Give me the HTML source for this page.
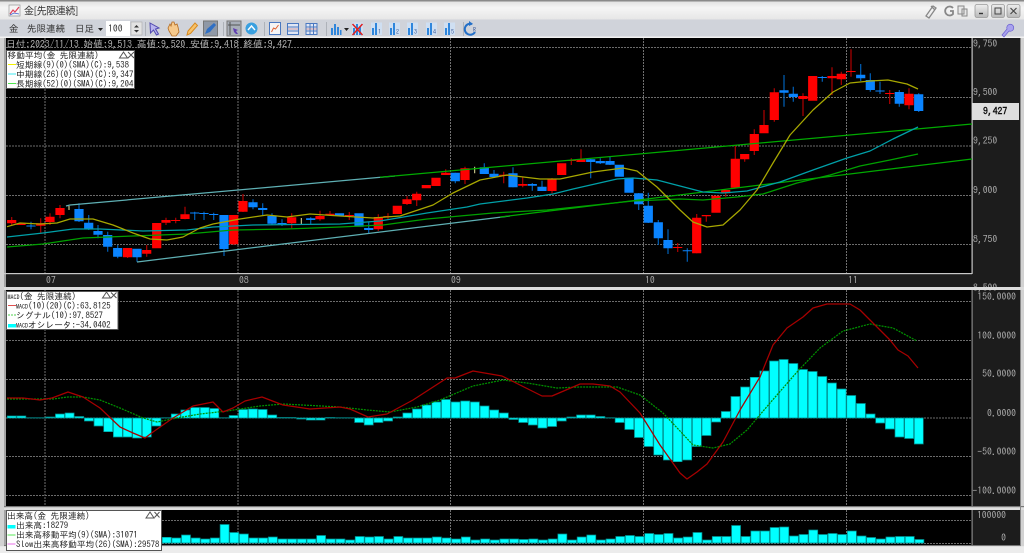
<!DOCTYPE html>
<html lang="ja"><head><meta charset="utf-8"><title>金[先限連続]</title>
<style>
html,body{margin:0;padding:0;width:1024px;height:553px;overflow:hidden;background:#d4d4d4}
svg{display:block;filter:blur(.35px)}
text{font-family:"IPAGothic","Noto Sans CJK JP",monospace;font-size:9.7px}
.a{fill:#aaa}.k{fill:#222}.k text{font-size:8.7px}
.g{stroke:#6c6c6c;stroke-width:1;stroke-dasharray:2 1;fill:none}
.v{stroke:#707070;stroke-width:1;stroke-dasharray:2 1;fill:none}
.l{fill:none;stroke-linejoin:round;stroke-width:1.25}
.h{fill:#0ff;stroke:#008a8a;stroke-width:.7}
</style></head><body>
<svg width="1024" height="553" viewBox="0 0 1024 553" xmlns="http://www.w3.org/2000/svg">
<defs><linearGradient id="tb" x1="0" y1="0" x2="0" y2="1"><stop offset="0" stop-color="#e2e2e2"/><stop offset=".35" stop-color="#f5f5f5"/><stop offset="1" stop-color="#e6e6e6"/></linearGradient>
<linearGradient id="btn" x1="0" y1="0" x2="0" y2="1"><stop offset="0" stop-color="#eee"/><stop offset="1" stop-color="#b8b8b8"/></linearGradient></defs>
<rect width="1024" height="553" fill="#d2d2d2"/>
<rect width="1024" height="1.5" fill="#8a8a8a"/>
<rect y="1.5" width="1024" height="18" fill="url(#tb)"/>
<rect y="19.5" width="1024" height="17.5" fill="#d0d3da"/>
<rect y="36.5" width="1024" height="1.5" fill="#f2f2f2"/>
<!-- title -->
<path d="M9 5h11v11H9z" fill="#f4f4f4" stroke="#999" stroke-width=".7"/><path d="M10 14l3-4 2 2 4-5" fill="none" stroke="#e0405a" stroke-width="1.2"/><path d="M10 15l4-2 5 1" fill="none" stroke="#4060d0" stroke-width=".8"/>
<text x="24" y="14.500" style="font-family:'Noto Sans CJK JP',sans-serif;font-size:10px;letter-spacing:-.4px" fill="#333">金[先限連続]</text>
<path d="M926 16l7-10 3 2-7 10zM931 6l4 4" fill="none" stroke="#888" stroke-width="1.3"/>
<path d="M953 8a4.500 4.500 0 1 0 0 6v-3h-3" fill="none" stroke="#888" stroke-width="1.8"/>
<path d="M958 6h6v8h-6zM962 9h5v7h-5z" fill="#e8e8e8" stroke="#888"/>
<g stroke="#999" stroke-width=".8"><rect x="975" y="4.500" width="13" height="13" rx="2" fill="url(#btn)"/><rect x="991.500" y="4.500" width="13" height="13" rx="2" fill="url(#btn)"/><rect x="1007" y="4.500" width="13" height="13" rx="2" fill="url(#btn)"/></g>
<path d="M979 13.500h4" stroke="#333" stroke-width="1.400"/><rect x="995" y="8" width="6" height="6" fill="none" stroke="#444"/><path d="M1010.500 8l6 6m0-6l-6 6" stroke="#444" stroke-width="1.100"/>
<!-- toolbar -->
<g fill="#333" style="font-size:9.500px"><text x="9" y="32" style="font-size:9.500px">金</text><text x="27" y="32" style="font-size:9.500px">先限連続</text><text x="75" y="32" style="font-size:9.500px">日足</text></g>
<path d="M98 28h5l-2.500 3z" fill="#222"/>
<rect x="106" y="21" width="24" height="15" fill="#fff"/><text x="108" y="32" fill="#333">100</text>
<rect x="131" y="22" width="11" height="13" fill="#e3e3e3" stroke="#aaa" stroke-width=".6"/><path d="M134 27.500l2.500-2.500 2.500 2.500zM134 30l2.500 2.500 2.500-2.500z" fill="#333"/>
<path d="M145.500 22v14" stroke="#aeb2b9"/>
<path d="M150 23l9 5-3.500 1 3 5-2 1-3-5-3 3z" fill="#b9b5ee" stroke="#5048b0"/>
<path d="M168 28l2-4 1 2 1-4 2 0 1 3 2-1 1 3 1 5-3 4h-4l-3-5z" fill="#f6c98c" stroke="#b26a20" stroke-width=".8"/>
<path d="M187 35l1-4 7-8 2.500 2.500-7 8z" fill="#f7c26a" stroke="#d88a20"/>
<rect x="203.500" y="21" width="14" height="15" fill="#8f98a6" stroke="#777"/><path d="M205 34l2-5 7-6 2 2-6 7z" fill="#2f6fc4"/>
<path d="M223.500 22v14" stroke="#aeb2b9"/>
<rect x="227" y="21" width="14" height="15" fill="#a8aeb8" stroke="#777"/><path d="M230 22v13M228 25h12" stroke="#555"/><path d="M233 28l5 2-2 1 2 3-2 0-2-2z" fill="#6040b0"/>
<circle cx="251.500" cy="28.500" r="6" fill="#3aa0e0"/><path d="M248 30l3.500-4 3.500 4" fill="none" stroke="#fff" stroke-width="1.400"/>
<path d="M264.500 22v14" stroke="#aeb2b9"/>
<rect x="269.500" y="22.500" width="11" height="12" fill="#f4f4f4" stroke="#4a78c0"/><path d="M271.500 32l2-4 2 1 3-4" fill="none" stroke="#e06030"/>
<path d="M287.500 23.500h11v11h-11zM287.500 27h11M287.500 31h11" fill="#dfe6f4" stroke="#4a78c0"/><path d="M288 29h10" stroke="#c07070" stroke-width=".6"/>
<path d="M306 23.500h11v11h-11zM306 27h11M306 31h11M310 23.500v11M313.500 23.500v11" fill="#dfe6f4" stroke="#4a78c0"/><path d="M306 29h11" stroke="#c07070" stroke-width=".6"/>
<path d="M326.500 22v14" stroke="#aeb2b9"/>
<g fill="#cfdff2"><rect x="352" y="22.500" width="11" height="12.500"/><rect x="371" y="22.500" width="11" height="12.500"/><rect x="389" y="22.500" width="11" height="12.500"/><rect x="407" y="22.500" width="11" height="12.500"/><rect x="426" y="22.500" width="11" height="12.500"/><rect x="444" y="22.500" width="11" height="12.500"/></g>
<g fill="#2f86dc"><path d="M331 28h2v7h-2zM334 24h2v11h-2zM337 27h2v8h-2zM340 30h1.500v5H340z"/></g>
<path d="M344 28h5l-2.500 3z" fill="#222"/>
<g fill="#2f86dc"><path d="M353 28h2v7h-2zM356 24h2v11h-2zM359 27h2v8h-2z"/><path d="M372 28h2v7h-2zM375 23h2v12h-2z"/><path d="M390 28h2v7h-2zM393 23h2v12h-2z"/><path d="M408 28h2v7h-2zM411 23h2v12h-2z"/><path d="M427 28h2v7h-2zM430 23h2v12h-2z"/><path d="M445 28h2v7h-2zM448 23h2v12h-2z"/></g>
<g fill="#3a5a9a" style="font-size:6px"><text x="378" y="34" style="font-size:6px">1</text><text x="396" y="34" style="font-size:6px">2</text><text x="414" y="34" style="font-size:6px">3</text><text x="433" y="34" style="font-size:6px">4</text><text x="451" y="34" style="font-size:6px">5</text></g>
<path d="M352.500 24l10 11m0-11l-10 11" stroke="#e02020" stroke-width="1.500"/>
<path d="M463.500 22v14" stroke="#aeb2b9"/>
<path d="M472 24a5.500 5.500 0 1 0 3 8" fill="none" stroke="#2470c8" stroke-width="2"/><path d="M469 21l4 3-4 2z" fill="#2470c8"/><text x="473" y="32" fill="#3a5a9a" style="font-size:6px">R</text>
<path d="M1002 35l5-6a3.500 3.500 0 1 1 2 2l-5 6z" fill="#a9a2ee" stroke="#6a60d0" stroke-width=".7"/>
<!-- panels -->
<rect x="4.500" y="38" width="1" height="508" fill="#777"/>
<rect x="6" y="38" width="966" height="235" fill="#000"/>
<rect x="6" y="274" width="966" height="13" fill="#1c1c1c"/>
<rect x="4" y="273" width="969" height="1.200" fill="#c8c8c8"/>
<rect x="972" y="38" width="48" height="249" fill="#1c1c1c"/>
<rect x="971.500" y="38" width="1.200" height="236" fill="#c8c8c8"/>
<rect x="6" y="290" width="966" height="216" fill="#000"/>
<rect x="972" y="290" width="48" height="216" fill="#1c1c1c"/>
<rect x="971.500" y="290" width="1.200" height="216" fill="#888"/>
<rect x="4" y="506" width="1020" height="1.300" fill="#777"/>
<rect x="4" y="507.300" width="1020" height="2.700" fill="#dedede"/>
<rect x="6" y="510" width="966" height="35" fill="#000"/>
<rect x="972" y="510" width="48" height="35" fill="#1c1c1c"/>
<rect x="971.500" y="510" width="1.200" height="36" fill="#888"/>
<rect x="4" y="545" width="1017" height="1.200" fill="#777"/>
<rect y="546.200" width="1024" height="7" fill="#ececec"/>
<rect x="1020" y="38" width="1" height="508" fill="#888"/>
<!-- grids -->
<path class="g" d="M6 47.500H972M6 97.500H972M6 146H972M6 195.500H972M6 244.500H972"/>
<path class="v" d="M45 38V273M238 38V273M450.500 38V273M643.500 38V273M846.500 38V273"/>
<path class="g" d="M6 301.500H972M6 340.500H972M6 379.500H972M6 418H972M6 456.500H972M6 495.500H972"/>
<path class="v" d="M45 290V506M238 290V506M450.500 290V506M643.500 290V506M846.500 290V506"/>
<path class="g" d="M6 520.500H972M6 543.500H972"/>
<path class="v" d="M45 510V545M238 510V545M450.500 510V545M643.500 510V545M846.500 510V545"/>
<!-- wicks -->
<path fill="none" stroke="#b00000" stroke-width="1.200" d="M11.700 217V225M40.700 218.300V232.700M50 213.300V225M60 205V218.300M127.600 248V258M146.700 245V256.700M166 217.700V225M175.700 217.700V223.300M185 206.700V219.300M233.700 215V245M243 194V212M291.700 213.300V228.300M320 210.700V220.700M330 211V216M349.300 212V220M378.300 214.300V231M388 213.300V220M407 196V205M416.700 191.700V206M445.700 169.300V175M465 166.700V184M503.700 171.700V183.300M522.700 177.300V187.300M552 178V193.300M571.300 158.300V165M581 149.300V162M677.700 243V252M696.700 214V253.300M706.300 215V221.700M725.700 190V196.700M735.300 145V188M744.700 154V161.700M754.300 129.300V155M764 110V133M774.300 88.300V121.700M803 93.300V116M832 67.300V95M841.300 71.700V85M851 49.300V76.700M889.700 90V104M909 88.300V109.300"/>
<path fill="none" stroke="#0060b8" stroke-width="1.200" d="M31 221.700V229.300M79 203.300V222M88.700 215V230M98 225V238.300M107.700 231.700V251.700M117.700 245V258.300M137 249V261.700M194.700 211.700V220M204 211.700V220M213.700 212.700V220M224 215V256M253 199.300V209.300M262.700 203.300V215M272 213.300V225M282 219.300V226M310.700 217.300V225M368.700 221.700V233.300M455.300 172.700V183.300M484.300 163.300V174M494 170V178M513 167.300V187.300M532.300 183V190.700M542 180.700V191M590.700 159V178.300M600.300 158.300V164M610 156.700V165M638.700 193V210M648.300 192.700V223M658.300 220V245M668 229.300V254M687.300 248.300V261.700M784 75V106.700M793.300 86.700V101.700M822.300 76V81.700M860.700 64V81M870.300 73.300V91.700M880 81.700V94M899.300 90V106.700M918.700 93.300V112"/>
<path fill="none" stroke="#e8e8a0" d="M69 206V210M301.300 218V225M474.700 166.700V173.300"/>
<!-- bodies -->
<path fill="none" stroke="#f00" stroke-width="9.200" d="M11.700 220V223.300M21 223.500V225M40.700 223.300V225.700M50 216.700V222M60 208V215M127.600 248V257.300M146.700 250V253.700M156.700 223V248.300M166 220V222.700M175.700 220V221M185 214.300V219M233.700 215V244.300M243 201V211.700M291.700 217.300V223.300M320 216V219.300M330 213.700V215.300M349.300 215V216M378.300 217V229.300M388 216V217M397.300 205.700V214M407 199.300V204M416.700 193.700V200.300M426.300 185V188.300M436 177.700V186M445.700 172.700V175M465 168.300V180M503.700 174.700V176M522.700 184V185.700M552 178.700V191M561.700 163.300V175M571.300 160V161M581 159.300V162M677.700 247V248M696.700 217.700V253.300M706.300 215V216.300M716 195.700V212.700M725.700 190V193.300M735.300 158.700V187.700M744.700 154V159.300M754.300 134V151M764 125V133.300M774.300 92.300V120M803 96V99M812.700 76V100.700M832 76V78.300M841.300 73.700V79.300M851 71V72M889.700 93V94M909 93.700V105.300"/>
<path fill="none" stroke="#0a84ff" stroke-width="9.200" d="M31 225.500V226.500M79 209V221.300M88.700 222.700V229M98 231V234.700M107.700 235V246.700M117.700 248V256.700M137 248.700V257.300M194.700 212.500V213.500M204 213V214M213.700 214V215M224 215V249M253 202.300V207.300M262.700 208V210M272 216V223.700M282 223V224.300M310.700 218.300V220M339.500 213.300V215.700M359 213.300V226.700M368.700 228V230M455.300 172.700V181.300M484.300 167.300V174M494 173.700V177M513 173.300V187.300M532.300 184V185.700M542 186.700V191M590.700 159.300V162M600.300 161V163.300M610 161V164.700M619.300 164.700V176.700M629 177.700V192.700M638.700 193.300V204.300M648.300 205.700V222.700M658.300 222.300V238.300M668 240V248.300M687.300 250.300V251.300M784 90.300V92.700M793.300 93.700V97M822.300 77V78M860.700 74.700V78.300M870.300 80V90M880 90.500V91.500M899.300 92V103.700M918.700 94.300V111"/>
<!-- trend lines -->
<path class="l" stroke="#5fb0b4" d="M66 206L70 205L395 176"/><path class="l" stroke="#0a0" d="M380 177.300L972 124"/>
<path class="l" stroke="#5fb0b4" d="M137 262L510 216"/><path class="l" stroke="#0a0" d="M500 217L972 159"/>
<!-- MAs -->
<path class="l" stroke="#00a000" d="M7 247L43 244L83 238L133 236L187 234L233 230L287 229L340 227L383 225L427 219L493 213L547 210L633 201L680 199L703 200L737 197L763 194L797 183L830 175L860 166L890 160L918 154"/>
<path class="l" stroke="#00a0a8" d="M7 237L43 233L73 229L100 229L143 231L187 230L213 227L253 225L340 224L380 221L427 213L467 207L480 204L527 198L553 194L573 189L617 179L633 178L657 180L680 186L703 192L723 193L747 191L780 182L813 170L847 158L870 151L893 139L918 127"/>
<path class="l" stroke="#a8a800" d="M7 226.700L20 223L40 224L57 223L70 219L93 219L113 225L133 233L150 239L167 240L183 237L200 228L213 224L240 219L267 215L287 217L310 214L340 216L373 218L400 216L433 205L453 193L480 180L507 175L540 179L560 179L593 172L623 168L637 171L657 187L680 210L693 222L707 227L723 225L740 210L757 190L773 163L790 135L813 110L833 92L850 83L870 81L888 80L907 84L918 89"/>
<!-- histogram -->
<path class="h" d="M7.200 418v-2h9v2zm9.650 0v-2h9v2zm9.650 0v-.3h9v.3zm9.650 0v-.3h9v.3zm9.650 0v-1h9v1zm9.650 0v-4h9v4zm9.650 0v-5h9v5zm9.650 0v-1.500h9v1.500zm9.650 0v3h9v-3zm9.650 0v8h9v-8zm9.650 0v13.700h9v-13.700zm9.650 0v19h9v-19zm9.650 0v19h9v-19zm9.650 0v20h9v-20zm9.650 0v19h9v-19zm9.650 0v8h9v-8zm9.650 0v-.3h9v.3zm9.650 0v-4h9v4zm9.650 0v-8h9v8zm9.650 0v-10.500h9v10.500zm9.650 0v-10.500h9v10.500zm9.650 0v-9.500h9v9.500zm9.650 0v-.3h9v.3zm9.650 0v-2.500h9v2.500zm9.650 0v-8.500h9v8.500zm9.650 0v-9h9v9zm9.650 0v-8.500h9v8.500zm9.650 0v-3h9v3zm9.650 0v-.5h9v.5zm9.650 0v-.5h9v.5zm9.650 0v1h9v-1zm9.650 0v2h9v-2zm9.650 0v2h9v-2zm9.650 0v-.5h9v.5zm9.650 0v-.3h9v.3zm9.650 0v-.3h9v.3zm9.650 0v4.500h9v-4.500zm9.650 0v7h9v-7zm9.650 0v4.500h9v-4.500zm9.650 0v3h9v-3zm9.650 0v-1h9v1zm9.650 0v-5h9v5zm9.650 0v-9h9v9zm9.650 0v-13h9v13zm9.650 0v-16h9v16zm9.650 0v-18.500h9v18.500zm9.650 0v-16h9v16zm9.650 0v-17h9v17zm9.650 0v-16h9v16zm9.650 0v-12h9v12zm9.650 0v-8h9v8zm9.650 0v-5h9v5zm9.650 0v1.500h9v-1.500zm9.650 0v4.500h9v-4.500zm9.650 0v7h9v-7zm9.650 0v10h9v-10zm9.650 0v8.500h9v-8.500zm9.650 0v3h9v-3zm9.650 0v-1h9v1zm9.650 0v-3h9v3zm9.650 0v-3h9v3zm9.650 0v-1.500h9v1.500zm9.650 0v-.3h9v.3zm9.650 0v4.500h9v-4.500zm9.650 0v11.500h9v-11.500zm9.650 0v19.500h9v-19.500zm9.650 0v28.500h9v-28.500zm9.650 0v37h9v-37zm9.650 0v42h9v-42zm9.650 0v43.700h9v-43.700zm9.650 0v42h9v-42zm9.650 0v28.500h9v-28.500zm9.650 0v17.500h9v-17.500zm9.650 0v4h9v-4zm9.650 0v-6.500h9v6.500zm9.650 0v-21.500h9v21.500zm9.650 0v-31h9v31zm9.650 0v-40.700h9v40.700zm9.650 0v-47h9v47zm9.650 0v-57h9v57zm9.650 0v-58.500h9v58.500zm9.650 0v-54.500h9v54.500zm9.650 0v-48.500h9v48.500zm9.650 0v-46.500h9v46.500zm9.650 0v-41.500h9v41.500zm9.650 0v-35h9v35zm9.650 0v-29h9v29zm9.650 0v-22.500h9v22.500zm9.650 0v-14.500h9v14.500zm9.650 0v-4h9v4zm9.650 0v5h9v-5zm9.650 0v11h9v-11zm9.650 0v19h9v-19zm9.650 0v20.500h9v-20.500zm9.650 0v26h9v-26z"/>
<path class="l" stroke="#009000" stroke-width="1.500" stroke-dasharray="2 1" d="M7 399L53 399L68 397L83 397L100 400L120 408L143 418L157 422L177 418L200 414L227 411L260 406L283 404L340 407L367 410L390 412L417 407L440 400L473 386L503 380L527 383L557 388L580 387L617 387L640 395L663 413L680 431L693 445L713 448L730 444L747 430L770 403L797 372L820 348L843 331L870 324L893 328L917 341"/>
<path class="l" stroke="#a80000" d="M7 398L23 398L40 400L52 398L68 392L83 397L100 408L120 427L133 433L145 438L153 432L173 418L193 406L213 402L223 412L233 408L245 401L262 397L283 405L310 409L340 407L350 409L368 417L387 414L413 400L447 378L455 378L473 371L502 376L520 385L542 396L552 396L580 384L593 384L610 386L620 392L640 413L660 445L680 473L687 479L697 472L707 464L723 442L740 410L760 377L773 345L787 328L803 317L813 308L827 304L850 304L860 310L877 327L890 340L898 350L908 356L918 368"/>
<!-- volume -->
<path class="h" d="M162.200 543v-5.700h9v5.700zm9.650 0v-5h9v5zm9.650 0v-8h9v8zm9.650 0v-5h9v5zm9.650 0v-4h9v4zm9.650 0v-5h9v5zm9.650 0v-18.500h9v18.500zm9.650 0v-10.500h9v10.500zm9.650 0v-9h9v9zm9.650 0v-5h9v5zm9.650 0v-5h9v5zm9.650 0v-6h9v6zm9.650 0v-4h9v4zm9.650 0v-4h9v4zm9.650 0v-4h9v4zm9.650 0v-4h9v4zm9.650 0v-7.500h9v7.500zm9.650 0v-4h9v4zm9.650 0v-4h9v4zm9.650 0v-3h9v3zm9.650 0v-6.500h9v6.500zm9.650 0v-6h9v6zm9.650 0v-6.500h9v6.500zm9.650 0v-4h9v4zm9.650 0v-6.500h9v6.500zm9.650 0v-5h9v5zm9.650 0v-5h9v5zm9.650 0v-5h9v5zm9.650 0v-6h9v6zm9.650 0v-5h9v5zm9.650 0v-4h9v4zm9.650 0v-6h9v6zm9.650 0v-3h9v3zm9.650 0v-4h9v4zm9.650 0v-3h9v3zm9.650 0v-4h9v4zm9.650 0v-4h9v4zm9.650 0v-3.500h9v3.500zm9.650 0v-4h9v4zm9.650 0v-3h9v3zm9.650 0v-4h9v4zm9.650 0v-9h9v9zm9.650 0v-3h9v3zm9.650 0v-6h9v6zm9.650 0v-8h9v8zm9.650 0v-3h9v3zm9.650 0v-4h9v4zm9.650 0v-6.500h9v6.500zm9.650 0v-7.500h9v7.500zm9.650 0v-6.500h9v6.500zm9.650 0v-9.500h9v9.500zm9.650 0v-8.500h9v8.500zm9.650 0v-9.500h9v9.500zm9.650 0v-5h9v5zm9.650 0v-6h9v6zm9.650 0v-10.500h9v10.500zm9.650 0v-3h9v3zm9.650 0v-6.500h9v6.500zm9.650 0v-6.500h9v6.500zm9.650 0v-17.500h9v17.500zm9.650 0v-6.500h9v6.500zm9.650 0v-12h9v12zm9.650 0v-12h9v12zm9.650 0v-15.500h9v15.500zm9.650 0v-16h9v16zm9.650 0v-7h9v7zm9.650 0v-8.500h9v8.500zm9.650 0v-13h9v13zm9.650 0v-8.500h9v8.500zm9.650 0v-9.500h9v9.500zm9.650 0v-8.500h9v8.500zm9.650 0v-12h9v12zm9.650 0v-7h9v7zm9.650 0v-5.500h9v5.500zm9.650 0v-4h9v4zm9.650 0v-6h9v6zm9.650 0v-6.500h9v6.500zm9.650 0v-6.500h9v6.500zm9.650 0v-3.500h9v3.500z"/>
<!-- axis text -->
<rect x="972" y="103" width="47" height="17" fill="#dedede"/>
<text x="983" y="114.500" fill="#111" font-weight="bold">9,427</text>
<g class="a"><text x="973" y="47">9,750</text><text x="973" y="95.500">9,500</text><text x="973" y="144">9,250</text><text x="973" y="193.500">9,000</text><text x="973" y="242.500">8,750</text><text x="973" y="291">8,500</text></g>
<rect x="4" y="287" width="1020" height="3" fill="#dcdcdc"/>
<g class="a" text-anchor="end"><text x="1016" y="300">150.0000</text><text x="1016" y="339">100.0000</text><text x="1016" y="377">50.0000</text><text x="1016" y="416.500">0.0000</text><text x="1016" y="455">-50.0000</text><text x="1016" y="494">-100.0000</text><text x="1006" y="518.500">100000</text><text x="1006" y="541">0</text></g>
<g class="a"><text x="46" y="283.500">07</text><text x="239" y="283.500">08</text><text x="451" y="283.500">09</text><text x="645" y="283.500">10</text><text x="848" y="283.500">11</text></g>
<text x="6" y="47.500" fill="#b4b4b4">日付:2023/11/13 始値:9,513 高値:9,520 安値:9,418 終値:9,427</text>
<!-- legend 1 -->
<rect x="6.500" y="50.500" width="128" height="38" fill="#fff" stroke="#555"/>
<g class="k"><text x="7.500" y="58.500">移動平均(金 先限連続)</text><text x="16" y="68">短期線(9)(0)(SMA)(C):9,538</text><text x="16" y="77.500">中期線(26)(0)(SMA)(C):9,347</text><text x="16" y="87">長期線(52)(0)(SMA)(C):9,204</text></g>
<path d="M8 64.500h8" stroke="#f2f200"/><path d="M8 74h8" stroke="#40e8f0"/><path d="M8 83.500h8" stroke="#50e850"/>
<path d="M119.500 58l4-6 4 6zM128 52l6 6m0-6l-6 6" fill="none" stroke="#555"/>
<!-- legend 2 -->
<rect x="6.500" y="291.500" width="111.500" height="38" fill="#fff" stroke="#555"/>
<g class="k"><text x="7.500" y="299.500"><tspan style="font-size:6px">MACD</tspan>(金 先限連続)</text><text x="16" y="309"><tspan style="font-size:6px">MACD</tspan>(10)(20)(C):63.8125</text><text x="16" y="318.500">シグナル(10):97.8527</text><text x="16" y="328"><tspan style="font-size:6px">MACD</tspan>オシレータ:-34.0402</text></g>
<path d="M8 305.500h8" stroke="#e05050"/><path d="M8 315h8" stroke="#50d050" stroke-dasharray="2 1"/><rect x="8" y="324" width="8" height="3.500" fill="#0ff"/>
<path d="M102.500 298l4-6 4 6zM111 292.500l5.500 5.500m0-5.500l-5.500 5.500" fill="none" stroke="#555"/>
<!-- legend 3 -->
<svg x="6" y="510" width="156" height="34" viewBox="0 0 156 34"><rect x=".5" y=".5" width="155" height="40" fill="#fff" stroke="#555"/>
<g class="k"><text x="1" y="9">出来高(金 先限連続)</text><text x="10" y="18.500">出来高:18279</text><text x="10" y="28">出来高移動平均(9)(SMA):31071</text><text x="10" y="37.500">Slow出来高移動平均(26)(SMA):29578</text></g>
<rect x="1.500" y="15" width="8" height="3.500" fill="#0ff"/><path d="M1.500 25h8" stroke="#90f090" stroke-width="1.500"/><path d="M1.500 34h8" stroke="#f0a0f0" stroke-width="1.500"/>
<path d="M140 8l4-6 4 6zM148.500 2l5 5.500m0-5.500l-5 5.500" fill="none" stroke="#555"/></svg>
</svg>
</body></html>
